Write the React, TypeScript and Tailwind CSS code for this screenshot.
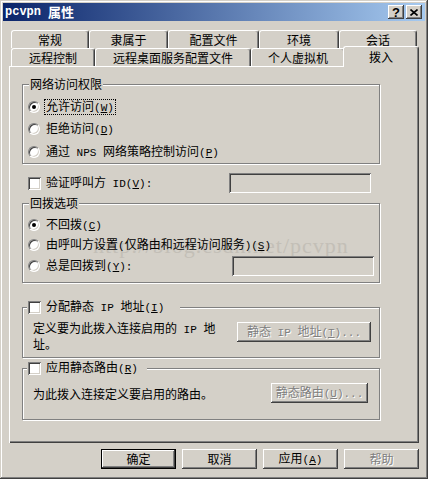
import type { ReactNode } from "react";

const raised =
  "shadow-[inset_-1px_-1px_#404040,inset_1px_1px_#ffffff,inset_-2px_-2px_#808080,inset_2px_2px_#d4d0c8]";
const sunken =
  "shadow-[inset_1px_1px_#808080,inset_-1px_-1px_#ffffff,inset_2px_2px_#404040,inset_-2px_-2px_#d4d0c8]";
const etched = "border border-[#808080] shadow-[1px_1px_0_#ffffff,inset_1px_1px_0_#ffffff]";
const greyText = "text-[#808080] [text-shadow:1px_1px_0_#ffffff]";

// half-width runs, SimSun-ish monospace
const A = ({ children }: { children: ReactNode }) => (
  <span className="font-['Liberation_Mono',monospace] text-[11px]">{children}</span>
);

const Key = ({ k }: { k: string }) => (
  <A>
    (<span className="underline underline-offset-1">{k}</span>)
  </A>
);

const Label = ({ children, focused = false }: { children: ReactNode; focused?: boolean }) => (
  <span
    className={`border border-dotted px-[1px] leading-[12px] whitespace-nowrap ${
      focused ? "border-black" : "border-transparent"
    }`}
  >
    {children}
  </span>
);

const Radio = ({ checked = false }: { checked?: boolean }) => (
  <span className="w-[12px] h-[12px] shrink-0 rounded-full bg-white border border-t-[#808080] border-l-[#808080] border-r-white border-b-white shadow-[inset_1px_1px_#404040,inset_-1px_-1px_#d4d0c8] flex items-center justify-center">
    {checked && <span className="w-[4px] h-[4px] rounded-full bg-black" />}
  </span>
);

const Check = () => <span className={`w-[13px] h-[13px] shrink-0 bg-white ${sunken}`} />;

const RadioRow = ({
  checked,
  focused,
  children,
  className = "",
  extra,
}: {
  checked?: boolean;
  focused?: boolean;
  children: ReactNode;
  className?: string;
  extra?: ReactNode;
}) => (
  <div className={`h-[20px] flex items-center gap-[4px] pl-[5px] ${className}`}>
    <Radio checked={checked} />
    <Label focused={focused}>{children}</Label>
    {extra}
  </div>
);

const Btn = ({
  children,
  w,
  disabled = false,
  isDefault = false,
  className = "",
}: {
  children: ReactNode;
  w: string;
  disabled?: boolean;
  isDefault?: boolean;
  className?: string;
}) => (
  <div
    className={`${w} h-[20px] shrink-0 flex items-center justify-center ${
      isDefault
        ? "shadow-[inset_0_0_0_1px_#000000,inset_-2px_-2px_#404040,inset_2px_2px_#ffffff,inset_-3px_-3px_#808080]"
        : raised
    } ${disabled ? greyText : ""} ${className}`}
  >
    <span className="leading-[14px] whitespace-nowrap">{children}</span>
  </div>
);

const Tab = ({ label, w, active = false }: { label: string; w: string; active?: boolean }) => (
  <div
    className={`${w} flex justify-center rounded-t-[3px] border-t border-l border-r border-t-white border-l-white border-r-[#404040] shadow-[inset_-1px_0_#808080] whitespace-nowrap leading-[14px] ${
      active
        ? "relative z-10 h-[21px] -mt-[2px] -mb-px -mx-[2px] bg-[#d4d0c8] items-center pb-[1px]"
        : "h-[18px] items-center pt-[1px]"
    }`}
  >
    {label}
  </div>
);

const TitleBar = () => (
  <div className="h-[18px] shrink-0 flex items-center pl-[2px] pr-[3px] bg-[linear-gradient(to_right,#0a246a,#a6caf0)] text-white font-bold">
    <span className="font-['Liberation_Mono',monospace] text-[12px]">pcvpn</span>
    <span className="ml-[7px] text-[13px] leading-[14px]">属性</span>
    <div className="ml-auto flex gap-[2px]">
      <div
        className={`w-[16px] h-[14px] bg-[#d4d0c8] ${raised} flex items-center justify-center text-black font-['Liberation_Sans',sans-serif] text-[13px] leading-none pt-[1px]`}
      >
        ?
      </div>
      <div className={`w-[16px] h-[14px] bg-[#d4d0c8] ${raised} flex items-center justify-center`}>
        <svg width="8" height="7" viewBox="0 0 8 7">
          <path d="M0.5 0.5 L7.5 6.5 M7.5 0.5 L0.5 6.5" stroke="#000" strokeWidth="1.6" fill="none" />
        </svg>
      </div>
    </div>
  </div>
);

const Tabs = () => (
  <div className="w-[410px] flex flex-col">
    <div className="flex pl-[2px]">
      <Tab label="常规" w="w-[78px]" />
      <Tab label="隶属于" w="w-[79px]" />
      <Tab label="配置文件" w="w-[91px]" />
      <Tab label="环境" w="w-[80px]" />
      <Tab label="会话" w="w-[78px]" />
    </div>
    <div className="flex pl-[2px]">
      <Tab label="远程控制" w="w-[84px]" />
      <Tab label="远程桌面服务配置文件" w="w-[156px]" />
      <Tab label="个人虚拟机" w="w-[94px]" />
      <Tab label="拨入" w="w-[76px]" active />
    </div>
  </div>
);

const GroupTitle = ({ children, className = "" }: { children: ReactNode; className?: string }) => (
  <div className={`-mt-[8px] h-[14px] shrink-0 bg-[#d4d0c8] flex items-center leading-[12px] whitespace-nowrap ${className}`}>
    {children}
  </div>
);

const Panel = () => (
  <div className="w-[410px] h-[377px] pl-[13px] pt-[18px] flex flex-col shadow-[inset_1px_1px_#ffffff,inset_-1px_-1px_#404040,inset_-2px_-2px_#808080]">
    {/* 网络访问权限 */}
    <div className={`w-[358px] h-[80px] flex flex-col ${etched}`}>
      <GroupTitle className="self-start ml-[6px] px-[1px]">网络访问权限</GroupTitle>
      <RadioRow checked focused className="mt-[6px]">
        允许访问<Key k="W" />
      </RadioRow>
      <RadioRow className="mt-[2px]">
        拒绝访问<Key k="D" />
      </RadioRow>
      <RadioRow className="mt-[3px]">
        通过<A> NPS </A>网络策略控制访问<Key k="P" />
      </RadioRow>
    </div>

    <div className="w-[358px] h-[20px] mt-[9px] flex items-center gap-[3px] pl-[6px]">
      <Check />
      <Label>
        验证呼叫方<A> ID</A>
        <Key k="V" />
        <A>:</A>
      </Label>
      <div className={`w-[142px] h-[20px] ml-auto mr-[9px] ${sunken}`} />
    </div>

    {/* 回拨选项 */}
    <div className={`w-[358px] h-[80px] mt-[10px] flex flex-col ${etched}`}>
      <GroupTitle className="self-start ml-[6px] px-[1px]">回拨选项</GroupTitle>
      <RadioRow checked className="mt-[5px]">
        不回拨<Key k="C" />
      </RadioRow>
      <RadioRow>
        由呼叫方设置<A>(</A>仅路由和远程访问服务<A>)</A>
        <Key k="S" />
      </RadioRow>
      <RadioRow
        className="mt-[1px]"
        extra={<div className={`w-[142px] h-[20px] ml-auto mr-[5px] ${sunken}`} />}
      >
        总是回拨到<Key k="Y" />
        <A>:</A>
      </RadioRow>
    </div>

    {/* 分配静态 IP 地址 */}
    <div className={`w-[358px] h-[51px] mt-[24px] flex flex-col ${etched}`}>
      <GroupTitle className="ml-[4px] pl-[1px] w-[153px] gap-[3px]">
        <Check />
        <Label>
          分配静态<A> IP </A>地址<Key k="I" />
        </Label>
      </GroupTitle>
      <div className="mt-[7px] flex items-start pl-[10px]">
        <p className="w-[185px] leading-[13px]">
          定义要为此拨入连接启用的<A> IP </A>地址。
        </p>
        <Btn w="w-[134px]" disabled className="ml-auto mr-[8px] mt-[1px]">
          静态<A> IP </A>地址<Key k="T" />
          <A>...</A>
        </Btn>
      </div>
    </div>

    {/* 应用静态路由 */}
    <div className={`w-[358px] h-[52px] mt-[10px] flex flex-col ${etched}`}>
      <GroupTitle className="ml-[4px] pl-[1px] w-[120px] gap-[3px]">
        <Check />
        <Label>
          应用静态路由<Key k="R" />
        </Label>
      </GroupTitle>
      <div className="mt-[8px] h-[20px] flex items-center pl-[10px]">
        <span className="leading-[13px]">为此拨入连接定义要启用的路由。</span>
        <Btn w="w-[97px]" disabled className="ml-auto mr-[11px]">
          静态路由<Key k="U" />
          <A>...</A>
        </Btn>
      </div>
    </div>
  </div>
);

export default function App() {
  return (
    <div className="relative isolate w-[428px] h-[479px] overflow-hidden bg-[#d4d0c8] p-[3px] flex flex-col text-[12px] text-black font-['Noto_Sans_CJK_SC',sans-serif] shadow-[inset_-1px_-1px_#404040,inset_1px_1px_#d4d0c8,inset_-2px_-2px_#808080,inset_2px_2px_#ffffff]">
      <TitleBar />
      <div className="pl-[6px] pt-[9px] flex flex-col">
        <Tabs />
        <Panel />
        <div className="mt-[6px] w-[410px] flex justify-end gap-[6px]">
          <Btn w="w-[75px]" isDefault>
            确定
          </Btn>
          <Btn w="w-[75px]">取消</Btn>
          <Btn w="w-[75px]">
            应用<Key k="A" />
          </Btn>
          <Btn w="w-[75px]" disabled>
            帮助
          </Btn>
        </div>
      </div>
      {/* blog watermark burned into the screenshot */}
      <span className="absolute -z-10 left-[93px] top-[235px] text-[22px] tracking-[1px] leading-none font-['Liberation_Serif',serif] text-[#c3bfb7] pointer-events-none">
        http://blog.csdn.net/pcvpn
      </span>
    </div>
  );
}
